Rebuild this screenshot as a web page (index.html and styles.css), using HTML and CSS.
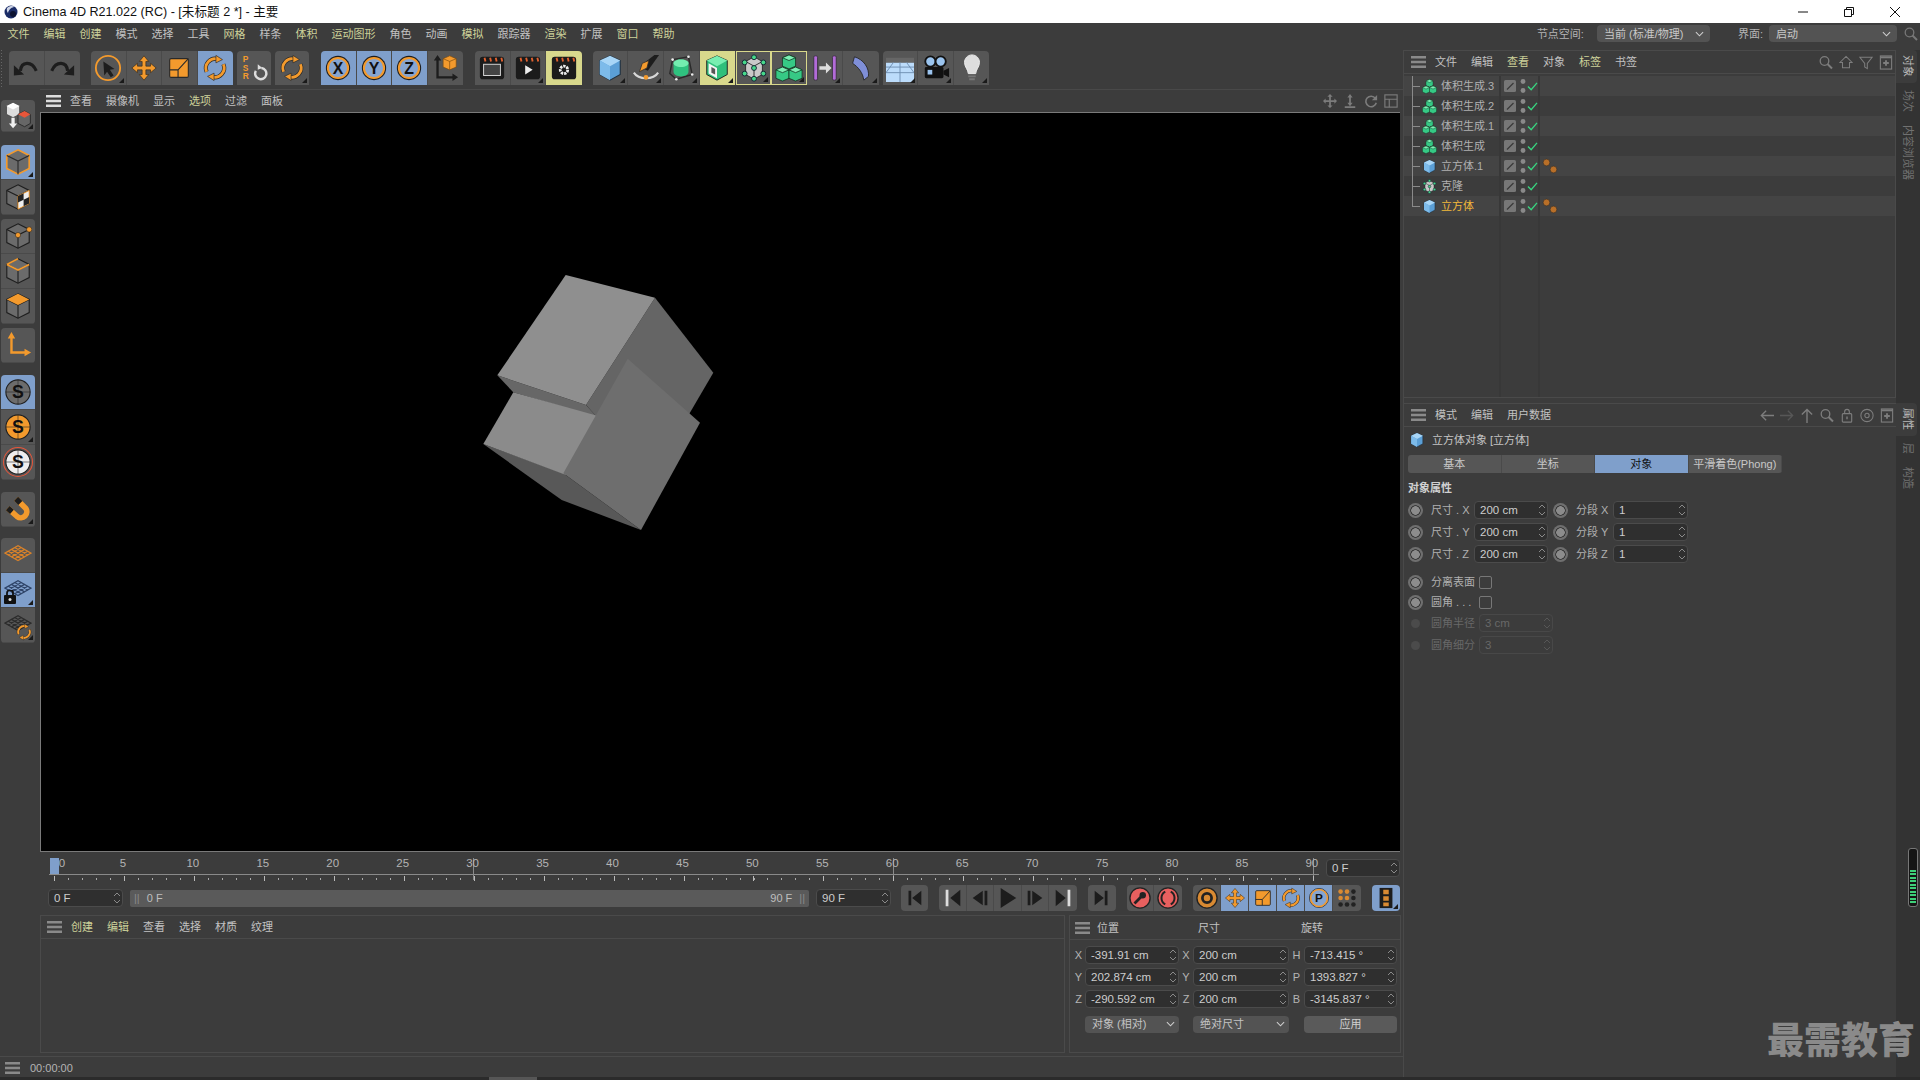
FILE: index.html
```html
<!DOCTYPE html>
<html lang="zh">
<head>
    <meta charset="UTF-8">
    <title>Cinema 4D R21.022 (RC) - [未标题 2 *] - 主要</title>
    <link rel="stylesheet" href="styles.css">
</head>
<body>
    <svg class="defs" aria-hidden="true">
        <symbol id="i-undo" viewBox="0 0 30 30"><path d="M9 18C10 8 21 7 26 18" fill="none" stroke="#1d1d1d" stroke-width="3.4"/><path d="M2 12l11 10-11 1z" fill="#1d1d1d"/></symbol>
        <symbol id="i-redo" viewBox="0 0 30 30"><path d="M21 18C20 8 9 7 4 18" fill="none" stroke="#1d1d1d" stroke-width="3.4"/><path d="M28 12L17 22l11 1z" fill="#1d1d1d"/></symbol>
        <symbol id="i-cursor" viewBox="0 0 30 30"><circle cx="15" cy="15" r="13" fill="none" stroke="#f39a2d" stroke-width="2"/><path d="M10 8l12 8-5 1 4 6-3 2-4-6-3 4z" fill="#1d1d1d"/></symbol>
        <symbol id="i-move" viewBox="0 0 30 30"><path d="M15 2l5 6h-3v5h5v-3l6 5-6 5v-3h-5v5h3l-5 6-5-6h3v-5H8v3l-6-5 6-5v3h5V8h-3z" fill="#f39a2d" stroke="#33281a" stroke-width=".7"/></symbol>
        <symbol id="i-scale" viewBox="0 0 30 30"><rect x="5" y="5" width="20" height="20" rx="1.5" fill="#f39a2d" stroke="#2a2a2a" stroke-width="1.2"/><path d="M5 17h9v8M14 17L25 5" fill="none" stroke="#2a2a2a" stroke-width="1.2"/></symbol>
        <symbol id="i-rotate" viewBox="0 0 30 30"><g fill="none" stroke="#2a2a2a" stroke-width="4.4"><path d="M6 19A10 10 0 0 1 18 5.500"/><path d="M24 11A10 10 0 0 1 12 24.500"/></g><g fill="none" stroke="#f39a2d" stroke-width="3"><path d="M6 19A10 10 0 0 1 18 5.500"/><path d="M24 11A10 10 0 0 1 12 24.500"/></g><path d="M16 1.500l7 4.500-7 3.500zM14 28.500L7 24l7-3.500z" fill="#f39a2d" stroke="#2a2a2a" stroke-width=".7"/></symbol>
        <symbol id="i-psr" viewBox="0 0 30 30"><path d="M23 15a6 6 0 1 1-6 3" fill="none" stroke="#ddd" stroke-width="2.600"/><path d="M19 11l5 4-5 2z" fill="#ddd"/></symbol>
        <symbol id="i-ring" viewBox="0 0 30 30"><circle cx="15" cy="15" r="13" fill="#1d1d1d"/><circle cx="15" cy="15" r="10.800" fill="#86a5d1" stroke="#f39a2d" stroke-width="2.200"/></symbol>
        <symbol id="i-coord" viewBox="0 0 30 30"><path d="M7 4v21h19" fill="none" stroke="#1d1d1d" stroke-width="2.500"/><path d="M7 1l4 6H3zM29 25l-6 4v-8z" fill="#1d1d1d"/><path d="M20 2l7 3v9l-7 3-7-3V5z" fill="#f39a2d" stroke="#7a4a10" stroke-width=".7"/><path d="M13 5l7 3 7-3M20 8v9" fill="none" stroke="#7a4a10" stroke-width=".7"/></symbol>
        <symbol id="i-clap" viewBox="0 0 30 30"><rect x="2" y="3" width="26" height="24" rx="3" fill="#1b1b1b"/><path d="M7 4l1 4M13 4l1 4M19 4l1 4M25 4l1 4" stroke="#e2612f" stroke-width="2"/></symbol>
        <symbol id="i-cube" viewBox="0 0 30 30"><path d="M15 2l11 5v15l-11 6-11-6V7z" fill="#5b9fd6" stroke="#22303c" stroke-width="1.200"/><path d="M15 2l11 5-11 6L4 7z" fill="#a8d6f7"/><path d="M15 13v15L4 22V7z" fill="#7dbbea"/></symbol>
        <symbol id="i-pen" viewBox="0 0 30 30"><path d="M13 16l2-8L24 1h5L17 18z" fill="#1d1d1d"/><path d="M8 19l3-9 7-3-2 8z" fill="#f39a2d" stroke="#2a2a2a" stroke-width=".8"/><path d="M2 20c5 8 21 8 26 0" fill="none" stroke="#d8d8d8" stroke-width="2.200"/><circle cx="15" cy="25" r="2.500" fill="#f39a2d"/></symbol>
        <symbol id="i-bool" viewBox="0 0 30 30"><path d="M6 6l17-3 4 19-17 5-7-6z" fill="none" stroke="#2a2a2a" stroke-width="1.500"/><path d="M15 6c5 0 8 2 8 4v9c0 3-4 5-8 5s-8-2-8-5v-9c0-2 3-4 8-4z" fill="#2fc27f"/><path d="M15 6c5 0 8 2 8 4s-3 4-8 4-8-2-8-4 3-4 8-4z" fill="#74eeb0"/><g fill="#eee"><circle cx="6" cy="6" r="1.400"/><circle cx="23" cy="3" r="1.400"/><circle cx="27" cy="22" r="1.400"/><circle cx="10" cy="27" r="1.400"/></g></symbol>
        <symbol id="i-shell" viewBox="0 0 30 30"><path d="M15 2l11 5v15l-11 6-11-6V7z" fill="#2fbf7b" stroke="#1d1d1d"/><path d="M15 2l11 5-11 6L4 7z" fill="#78eeb1"/><path d="M6 10l9 5v11l-9-5z" fill="#f4f4f4"/><path d="M9 14l4 2v6l-4-2z" fill="#555"/></symbol>
        <symbol id="i-cloner" viewBox="0 0 30 30"><path d="M15 3l9 5v14l-9 5-9-5V8z" fill="#c9c9c9" stroke="#2a2a2a"/><path d="M15 13v14M6 8l9 5 9-5" fill="none" stroke="#2a2a2a"/><g fill="#47d88a" stroke="#123"><circle cx="15" cy="3.500" r="2.600"/><circle cx="5" cy="9" r="2.600"/><circle cx="25" cy="9" r="2.600"/><circle cx="5" cy="21" r="2.600"/><circle cx="25" cy="21" r="2.600"/><circle cx="15" cy="26.500" r="2.600"/><circle cx="15" cy="15" r="2.600"/></g></symbol>
        <symbol id="i-boxes" viewBox="0 0 30 30"><g stroke="#12301f" stroke-width=".8"><path d="M15 1l7 3v9l-7 3-7-3V4z" fill="#36c985"/><path d="M15 1l7 3-7 3-7-3z" fill="#7cefb4"/><path d="M8 14l7 3v9l-7 3-7-3v-9z" fill="#36c985"/><path d="M8 14l7 3-7 3-7-3z" fill="#7cefb4"/><path d="M22 14l7 3v9l-7 3-7-3v-9z" fill="#36c985"/><path d="M22 14l7 3-7 3-7-3z" fill="#7cefb4"/></g></symbol>
        <symbol id="i-symmetry" viewBox="0 0 30 30"><rect x="3" y="2" width="4" height="26" rx="1.500" fill="#b26bd8" stroke="#222" stroke-width=".7"/><rect x="23" y="2" width="4" height="26" rx="1.500" fill="#b26bd8" stroke="#222" stroke-width=".7"/><path d="M9 13h7V9l6 6-6 6v-4H9z" fill="#ddd"/></symbol>
        <symbol id="i-bend" viewBox="0 0 30 30"><path d="M8 3c10 3 16 12 15 21l-5 4c-1-8-6-14-12-18z" fill="#7f8fd8" stroke="#2a2a2a"/></symbol>
        <symbol id="i-floor" viewBox="0 0 30 30"><path d="M0 9h30v21H0z" fill="#bcdcfb"/><path d="M0 4h30v5H0z" fill="#666"/><path d="M0 14h30M0 20h30M8 9L0 20M15 9v21M22 9l8 11" stroke="#6e8eb0"/></symbol>
        <symbol id="i-cam" viewBox="0 0 30 30"><circle cx="9" cy="8" r="5.500" fill="#9bc4ee" stroke="#111" stroke-width="2"/><circle cx="20" cy="8" r="5.500" fill="#9bc4ee" stroke="#111" stroke-width="2"/><rect x="3" y="14" width="20" height="12" rx="1.500" fill="#111"/><path d="M23 18l6-3v10l-6-3z" fill="#111"/><rect x="6" y="17" width="5" height="5" fill="#9bc4ee"/></symbol>
        <symbol id="i-bulb" viewBox="0 0 30 30"><path d="M15 1c5 0 8 4 8 8 0 5-4 8-4 12h-8c0-4-4-7-4-12 0-4 3-8 8-8z" fill="#ddd" stroke="#eee"/><path d="M11 23h8v2h-8zM12 26h6v2h-6z" fill="#777"/></symbol>
        <symbol id="i-model" viewBox="0 0 34 34"><path d="M11 1l8 4v10l-8 4-8-4V5z" fill="#ddd" stroke="#444"/><path d="M11 1l8 4-8 4-8-4z" fill="#fff"/><path d="M9 19v7H6l5 6 5-6h-3v-7z" fill="#eee"/><path d="M25 11l7 4v11l-7 4-8-4V15z" fill="#666" stroke="#222"/><path d="M25 11l7 4-7 4-8-4z" fill="#e8563a"/></symbol>
        <symbol id="i-gcube" viewBox="0 0 30 30"><path d="M15 2l12 6v14l-12 6-12-6V8z" fill="#6b6b6b" stroke="#1f1f1f" stroke-width="1.200"/><path d="M3 8l12 6 12-6M15 14v14" fill="none" stroke="#1f1f1f" stroke-width="1.200"/></symbol>
        <symbol id="i-ocube" viewBox="0 0 30 30"><path d="M15 2l12 6v14l-12 6-12-6V8z" fill="#6b6b6b" stroke="#f39a2d" stroke-width="1.800"/><path d="M3 8l12 6 12-6M15 14v14" fill="none" stroke="#2a2a2a" stroke-width="1.200"/></symbol>
        <symbol id="i-checker" viewBox="0 0 30 30"><use href="#i-gcube"/><path d="M15 14l12-6v14l-12 6z" fill="#eee" stroke="#f39a2d"/><path d="M15 14l6-3v7l-6 3zM21 18l6-3v7l-6 3z" fill="#222"/></symbol>
        <symbol id="i-points" viewBox="0 0 30 30"><use href="#i-gcube"/><circle cx="15" cy="14" r="2.800" fill="#f39a2d" stroke="#222" stroke-width=".6"/><circle cx="27" cy="8" r="2.800" fill="#f39a2d" stroke="#222" stroke-width=".6"/></symbol>
        <symbol id="i-edges" viewBox="0 0 30 30"><use href="#i-gcube"/><path d="M3 8l12 6 12-6M3 8l12-6" fill="none" stroke="#f39a2d" stroke-width="1.800"/></symbol>
        <symbol id="i-polys" viewBox="0 0 30 30"><use href="#i-gcube"/><path d="M15 2l12 6-12 6L3 8z" fill="#f39a2d"/></symbol>
        <symbol id="i-axis" viewBox="0 0 30 30"><path d="M8 6v17h17" fill="none" stroke="#f39a2d" stroke-width="2.600"/><path d="M8 1l4 7H4zM29 23l-7 4v-8z" fill="#f39a2d"/></symbol>
        <symbol id="i-snap" viewBox="0 0 30 30"><circle cx="15" cy="15" r="13" fill="currentColor" stroke="#222" stroke-width="1.200"/><path d="M2 15h26M15 2v26" stroke="#222" stroke-width=".6"/></symbol>
        <symbol id="i-magnet" viewBox="0 0 30 30"><path d="M4 14l10 9a6.400 6.400 0 0 0 9-9L13 4" fill="none" stroke="#f39a2d" stroke-width="6"/><path d="M4 14l4.500 4M13 4l4.500 4.500" fill="none" stroke="#1d1d1d" stroke-width="6"/></symbol>
        <symbol id="i-grid" viewBox="0 0 30 30"><path d="M1 13L15 5l14 8-14 8z" fill="none" stroke="currentColor" stroke-width="1.300"/><path d="M4.500 11l14 8M8 9l14 8M11.500 7l14 8M4.500 15l14-8M8 17l14-8M11.500 19l14-8" stroke="currentColor" stroke-width="1.300"/></symbol>
        <symbol id="i-lock" viewBox="0 0 14 14"><rect x="1" y="5" width="12" height="9" rx="1" fill="#111"/><path d="M4 5V3a3 3 0 0 1 6 0v2" fill="none" stroke="#111" stroke-width="1.800"/><circle cx="7" cy="9.500" r="1.500" fill="#ddd"/></symbol>
        <symbol id="i-first" viewBox="0 0 24 24"><path d="M6 4v16h3V4zM20 4v16l-10-8z" fill="#1c1c1c"/></symbol>
        <symbol id="i-prevkey" viewBox="0 0 24 24"><rect x="4" y="3" width="3" height="18" fill="#ddd"/><path d="M20 3v18L9 12z" fill="#1c1c1c"/></symbol>
        <symbol id="i-back" viewBox="0 0 24 24"><path d="M15 4v16L4 12zM17 4h3v16h-3z" fill="#1c1c1c"/></symbol>
        <symbol id="i-play" viewBox="0 0 24 24"><path d="M4 1v22l17-11z" fill="#1c1c1c"/></symbol>
        <symbol id="i-fwd" viewBox="0 0 24 24"><path d="M9 4v16l11-8zM4 4h3v16H4z" fill="#1c1c1c"/></symbol>
        <symbol id="i-nextkey" viewBox="0 0 24 24"><rect x="17" y="3" width="3" height="18" fill="#ddd"/><path d="M4 3v18l11-9z" fill="#1c1c1c"/></symbol>
        <symbol id="i-last" viewBox="0 0 24 24"><path d="M18 4v16h-3V4zM4 4v16l10-8z" fill="#1c1c1c"/></symbol>
        <symbol id="i-rec" viewBox="0 0 24 24"><circle cx="12" cy="12" r="11" fill="#e8605f" stroke="#222" stroke-width="1.500"/><path d="M6 18l7-7" stroke="#222" stroke-width="3"/><circle cx="15" cy="9" r="3.500" fill="#222"/></symbol>
        <symbol id="i-auto" viewBox="0 0 24 24"><circle cx="12" cy="12" r="11" fill="#e8605f" stroke="#222" stroke-width="1.500"/><path d="M9 5a8 8 0 0 0 0 14M15 5a8 8 0 0 1 0 14" fill="none" stroke="#222" stroke-width="2.200"/></symbol>
        <symbol id="i-key" viewBox="0 0 24 24"><circle cx="12" cy="12" r="11" fill="#d98a32" stroke="#222" stroke-width="1.500"/><circle cx="12" cy="12" r="5" fill="none" stroke="#222" stroke-width="3"/></symbol>
        <symbol id="i-pla" viewBox="0 0 30 30"><circle cx="15" cy="15" r="13" fill="none" stroke="#1d1d1d" stroke-width="1"/><circle cx="15" cy="15" r="11.500" fill="#86a5d1" stroke="#f39a2d" stroke-width="2.200"/></symbol>
        <symbol id="i-dots" viewBox="0 0 24 24"><g fill="#d98a32"><circle cx="5" cy="5" r="2.500"/><circle cx="12" cy="5" r="2.500"/><circle cx="5" cy="12" r="2.500"/><circle cx="12" cy="12" r="2.500"/></g><g fill="#222"><circle cx="19" cy="5" r="2.500"/><circle cx="19" cy="12" r="2.500"/><circle cx="5" cy="19" r="2.500"/><circle cx="12" cy="19" r="2.500"/><circle cx="19" cy="19" r="2.500"/></g></symbol>
        <symbol id="i-film" viewBox="0 0 24 24"><rect x="5" y="1" width="14" height="22" fill="#1d1d1d"/><path d="M9 3h6v5H9zM9 10h6v5H9zM9 17h6v4H9z" fill="#d98a32"/></symbol>
        <symbol id="i-burger" viewBox="0 0 15 12"><path d="M0 0h15v2.400H0zM0 4.800h15v2.400H0zM0 9.600h15V12H0z" fill="currentColor"/></symbol>
        <symbol id="i-search" viewBox="0 0 14 14"><circle cx="5.500" cy="5.500" r="4.300" fill="none" stroke="currentColor" stroke-width="1.300"/><path d="M8.500 8.500l4.500 4.500" stroke="currentColor" stroke-width="2"/></symbol>
        <symbol id="i-home" viewBox="0 0 16 16"><path d="M8 1l7 7h-3v6H4V8H1z" fill="none" stroke="currentColor" stroke-width="1.200"/></symbol>
        <symbol id="i-filter" viewBox="0 0 16 16"><path d="M1 2h14L9.500 9v6l-3-2V9z" fill="none" stroke="currentColor" stroke-width="1.200"/></symbol>
        <symbol id="i-plusbox" viewBox="0 0 14 16"><rect x="1" y="1" width="12" height="14" fill="none" stroke="currentColor" stroke-width="1.200"/><path d="M1 2.500h12" stroke="currentColor" stroke-width="2"/><path d="M7 5.500v6M4 8.500h6" stroke="currentColor" stroke-width="2"/></symbol>
        <symbol id="i-left" viewBox="0 0 16 14"><path d="M16 7H2M7 1.500L1.500 7 7 12.500" fill="none" stroke="currentColor" stroke-width="1.500"/></symbol>
        <symbol id="i-right" viewBox="0 0 16 14"><path d="M0 7h14M9 1.500L14.500 7 9 12.500" fill="none" stroke="currentColor" stroke-width="1.500"/></symbol>
        <symbol id="i-up" viewBox="0 0 14 16"><path d="M7 16V2M1.500 7L7 1.500 12.500 7" fill="none" stroke="currentColor" stroke-width="1.500"/></symbol>
        <symbol id="i-lockline" viewBox="0 0 14 16"><rect x="2" y="6" width="10" height="9" rx="1" fill="none" stroke="currentColor" stroke-width="1.200"/><path d="M4.500 6V4a2.500 2.500 0 0 1 5 0v2" fill="none" stroke="currentColor" stroke-width="1.200"/><path d="M7 9v3" stroke="currentColor" stroke-width="1.500"/></symbol>
        <symbol id="i-target" viewBox="0 0 16 16"><circle cx="8" cy="8" r="7" fill="none" stroke="currentColor" stroke-width="1.200"/><circle cx="8" cy="8" r="2.500" fill="none" stroke="currentColor" stroke-width="1.200"/></symbol>
        <symbol id="i-nav-move" viewBox="0 0 16 16"><path d="M8 0l3 3H9v4h4V5l3 3-3 3V9H9v4h2l-3 3-3-3h2V9H3v2L0 8l3-3v2h4V3H5z" fill="currentColor"/></symbol>
        <symbol id="i-nav-zoom" viewBox="0 0 16 16"><path d="M8 0l3 4H9v6h2L8 14l-3-4h2V4H5zM2 14h12v2H2z" fill="currentColor"/></symbol>
        <symbol id="i-nav-rot" viewBox="0 0 16 16"><path d="M13 5a6 6 0 1 0 1 5" fill="none" stroke="currentColor" stroke-width="1.800"/><path d="M15 1v6H9z" fill="currentColor"/></symbol>
        <symbol id="i-nav-pane" viewBox="0 0 16 16"><rect x="1" y="1" width="14" height="14" fill="none" stroke="currentColor" stroke-width="1.300"/><path d="M1 6h14M6 6v9" stroke="currentColor" stroke-width="1.300"/></symbol>
        <symbol id="i-spin" viewBox="0 0 8 14"><path d="M1 5l3-3 3 3M1 9l3 3 3-3" fill="none" stroke="currentColor"/></symbol>
        <symbol id="i-chev" viewBox="0 0 10 6"><path d="M1 1l4 4 4-4" fill="none" stroke="currentColor" stroke-width="1.200"/></symbol>
        <symbol id="i-check" viewBox="0 0 12 10"><path d="M1 5l3.500 3.500L11 1" fill="none" stroke="#38d47f" stroke-width="1.500"/></symbol>
        <symbol id="i-edit" viewBox="0 0 12 12"><rect width="12" height="12" rx="1.500" fill="#777"/><path d="M3 9.500L9.500 3" stroke="#3a3a3a" stroke-width="1.200"/></symbol>
        <symbol id="i-vis" viewBox="0 0 6 16"><circle cx="3" cy="3.500" r="2.400" fill="#8a8a8a"/><circle cx="3" cy="12.500" r="2.400" fill="#8a8a8a"/></symbol>
        <symbol id="i-tags" viewBox="0 0 16 16"><circle cx="4.500" cy="4.500" r="3.400" fill="#b86f28" stroke="#2a2a2a" stroke-width=".6"/><circle cx="11.500" cy="11.500" r="3.400" fill="#b86f28" stroke="#2a2a2a" stroke-width=".6"/></symbol>
        <symbol id="i-logo" viewBox="0 0 14 14"><circle cx="7" cy="7" r="6.500" fill="#1b2c66"/><path d="M3 3a6 6 0 0 1 8-1c-3 0-6 2-7 6-1-1-1.500-3-1-5z" fill="#cfd6e8"/><circle cx="9" cy="9" r="3" fill="#0b1230"/></symbol>
    </svg>

    <div class="titlebar">
        <svg class="title-logo"><use href="#i-logo"/></svg>
        <span class="title-text">Cinema 4D R21.022 (RC) - [未标题 2 *] - 主要</span>
        <div class="win-controls">
            <svg viewBox="0 0 12 12"><path d="M1 6h10" stroke="#111"/></svg>
            <svg viewBox="0 0 12 12"><path d="M1.500 3.500h7v7h-7zM3.500 3.500v-2h7v7h-2" fill="none" stroke="#111"/></svg>
            <svg viewBox="0 0 12 12"><path d="M1 1l10 10M11 1L1 11" stroke="#111"/></svg>
        </div>
    </div>

    <div class="menubar">
        <span class="hl">文件</span><span class="hl">编辑</span><span class="hl">创建</span><span>模式</span><span>选择</span><span>工具</span><span class="hl">网格</span><span>样条</span><span class="hl">体积</span><span class="hl">运动图形</span><span>角色</span><span>动画</span><span class="hl">模拟</span><span>跟踪器</span><span class="hl">渲染</span><span>扩展</span><span class="hl">窗口</span><span class="hl">帮助</span>
        <div class="node-space">
            <label>节点空间:</label>
            <div class="select select-node">当前 (标准/物理)<svg class="chev"><use href="#i-chev"/></svg></div>
            <label class="layout-label">界面:</label>
            <div class="select select-layout">启动<svg class="chev"><use href="#i-chev"/></svg></div>
            <svg class="menu-search"><use href="#i-search"/></svg>
        </div>
    </div>

    <div class="main">
        <div class="left-col">
            <div class="toolbar">
                <div class="tool-group first">
                    <div class="tb"><svg><use href="#i-undo"/></svg></div>
                    <div class="tb"><svg><use href="#i-redo"/></svg></div>
                </div>
                <div class="tool-group sep-first">
                    <div class="tb more"><svg><use href="#i-cursor"/></svg></div>
                    <div class="tb"><svg><use href="#i-move"/></svg></div>
                    <div class="tb"><svg><use href="#i-scale"/></svg></div>
                    <div class="tb on"><svg><use href="#i-rotate"/></svg></div>
                </div>
                <div class="tool-group">
                    <div class="tb single"><svg viewBox="0 0 30 30"><use href="#i-psr"/><text class="psr" x="3" y="9">P</text><text class="psr" x="3" y="18">S</text><text class="psr" x="3" y="27">R</text></svg></div>
                </div>
                <div class="tool-group"><div class="tb single more"><svg><use href="#i-rotate"/></svg></div></div>
                <div class="tool-group sep">
                    <div class="tb on"><svg viewBox="0 0 30 30"><use href="#i-ring"/><text class="glyph" x="15" y="21">X</text></svg></div>
                    <div class="tb on"><svg viewBox="0 0 30 30"><use href="#i-ring"/><text class="glyph" x="15" y="21">Y</text></svg></div>
                    <div class="tb on"><svg viewBox="0 0 30 30"><use href="#i-ring"/><text class="glyph" x="15" y="21">Z</text></svg></div>
                    <div class="tb"><svg><use href="#i-coord"/></svg></div>
                </div>
                <div class="tool-group sep">
                    <div class="tb"><svg viewBox="0 0 30 30"><use href="#i-clap"/><rect x="6" y="11" width="18" height="12" fill="#444" stroke="#ddd"/></svg></div>
                    <div class="tb more"><svg viewBox="0 0 30 30"><use href="#i-clap"/><path d="M12 12l8 5-8 5z" fill="#eee"/></svg></div>
                    <div class="tb lit"><svg viewBox="0 0 30 30"><use href="#i-clap"/><circle cx="15" cy="17" r="4" fill="none" stroke="#eee" stroke-width="3" stroke-dasharray="2.500 1"/></svg></div>
                </div>
                <div class="tool-group sep wide">
                    <div class="tb more"><svg><use href="#i-cube"/></svg></div>
                    <div class="tb more"><svg><use href="#i-pen"/></svg></div>
                    <div class="tb more"><svg><use href="#i-bool"/></svg></div>
                    <div class="tb lit more"><svg><use href="#i-shell"/></svg></div>
                    <div class="tb lit-line more"><svg><use href="#i-cloner"/></svg></div>
                    <div class="tb lit-line more"><svg><use href="#i-boxes"/></svg></div>
                    <div class="tb more"><svg><use href="#i-symmetry"/></svg></div>
                    <div class="tb more"><svg><use href="#i-bend"/></svg></div>
                </div>
                <div class="tool-group">
                    <div class="tb more"><svg><use href="#i-floor"/></svg></div>
                    <div class="tb more"><svg><use href="#i-cam"/></svg></div>
                    <div class="tb more"><svg><use href="#i-bulb"/></svg></div>
                </div>
            </div>

            <div class="work">
                <div class="tool-strip">
                    <div class="strip-group strip-model"><div class="sb more"><svg viewBox="0 0 34 34"><use href="#i-model"/></svg></div></div>
                    <div class="strip-group gap-13">
                        <div class="sb on more"><svg><use href="#i-ocube"/></svg></div>
                        <div class="sb"><svg><use href="#i-checker"/></svg></div>
                    </div>
                    <div class="strip-group">
                        <div class="sb"><svg><use href="#i-points"/></svg></div>
                        <div class="sb"><svg><use href="#i-edges"/></svg></div>
                        <div class="sb"><svg><use href="#i-polys"/></svg></div>
                    </div>
                    <div class="strip-group"><div class="sb"><svg><use href="#i-axis"/></svg></div></div>
                    <div class="strip-group gap-12">
                        <div class="sb on"><svg class="snap-gray" viewBox="0 0 30 30"><use href="#i-snap"/><text class="glyph-s" x="15" y="21.500">S</text></svg></div>
                        <div class="sb more"><svg class="snap-orange" viewBox="0 0 30 30"><use href="#i-snap"/><text class="glyph-s" x="15" y="21.500">S</text></svg></div>
                        <div class="sb"><svg class="snap-white" viewBox="0 0 30 30"><use href="#i-snap"/><text class="glyph-s" x="15" y="21.500">S</text></svg></div>
                    </div>
                    <div class="strip-group gap-12"><div class="sb more"><svg><use href="#i-magnet"/></svg></div></div>
                    <div class="strip-group gap-11">
                        <div class="sb"><svg class="grid-orange"><use href="#i-grid"/></svg></div>
                        <div class="sb on more"><svg class="grid-blue"><use href="#i-grid"/></svg><svg class="badge-lock"><use href="#i-lock"/></svg></div>
                        <div class="sb more"><svg class="grid-dark"><use href="#i-grid"/></svg><svg class="badge-rot"><use href="#i-rotate"/></svg></div>
                    </div>
                </div>

                <div class="center">
                    <div class="panel-menu vp-menu">
                        <svg class="burger"><use href="#i-burger"/></svg>
                        <span>查看</span><span>摄像机</span><span>显示</span><span class="hl">选项</span><span>过滤</span><span>面板</span>
                        <div class="vp-nav">
                            <svg><use href="#i-nav-move"/></svg>
                            <svg><use href="#i-nav-zoom"/></svg>
                            <svg><use href="#i-nav-rot"/></svg>
                            <svg><use href="#i-nav-pane"/></svg>
                        </div>
                    </div>

                    <div class="viewport">
                        <svg viewBox="41 113 1359 738">
                            <polygon points="655,297.700 713.300,372.700 688,416 620,420 595,415 586,405" fill="#656565"/>
                            <polygon points="497.300,375.300 586,405 597,417 513.300,392.300" fill="#676767"/>
                            <polygon points="565.700,275 655,297.700 586,405 497.300,375.300" fill="#8f8f8f"/>
                            <polygon points="483.300,444 563.300,473.300 641,530 561.700,500" fill="#585858"/>
                            <polygon points="513.300,392.300 598,416 566,475 483.300,444" fill="#8b8b8b"/>
                            <polygon points="627.700,358.700 700,422.700 641,530 563.300,473.300" fill="#6e6e6e"/>
                        </svg>
                    </div>

                    <div class="timeline">
                        <div class="ruler">
                            <div class="ruler-labels">
                                <span class="zero">0</span><span>5</span><span>10</span><span>15</span><span>20</span><span>25</span><span>30</span><span>35</span><span>40</span><span>45</span><span>50</span><span>55</span><span>60</span><span>65</span><span>70</span><span>75</span><span>80</span><span>85</span><span>90</span>
                            </div>
                            <div class="ruler-line"></div>
                            <div class="ruler-ticks"></div>
                            <div class="ruler-head"></div>
                        </div>
                        <div class="field frame-now">0 F<svg class="spin"><use href="#i-spin"/></svg></div>
                    </div>

                    <div class="transport">
                        <div class="field frame-start">0 F<svg class="spin"><use href="#i-spin"/></svg></div>
                        <div class="range">
                            <span class="range-side"><i>||</i>0 F</span>
                            <span class="range-side">90 F<i>||</i></span>
                        </div>
                        <div class="field frame-end">90 F<svg class="spin"><use href="#i-spin"/></svg></div>
                        <div class="tool-group trans-first"><div class="pb"><svg><use href="#i-first"/></svg></div></div>
                        <div class="tool-group trans-sep">
                            <div class="pb"><svg><use href="#i-prevkey"/></svg></div>
                            <div class="pb"><svg><use href="#i-back"/></svg></div>
                            <div class="pb"><svg><use href="#i-play"/></svg></div>
                            <div class="pb"><svg><use href="#i-fwd"/></svg></div>
                            <div class="pb"><svg><use href="#i-nextkey"/></svg></div>
                        </div>
                        <div class="tool-group trans-sep"><div class="pb"><svg><use href="#i-last"/></svg></div></div>
                        <div class="tool-group trans-sep">
                            <div class="pb"><svg><use href="#i-rec"/></svg></div>
                            <div class="pb"><svg><use href="#i-auto"/></svg></div>
                        </div>
                        <div class="tool-group trans-sep keys">
                            <div class="pb"><svg><use href="#i-key"/></svg></div>
                            <div class="pb on"><svg><use href="#i-move"/></svg></div>
                            <div class="pb on"><svg><use href="#i-scale"/></svg></div>
                            <div class="pb on"><svg><use href="#i-rotate"/></svg></div>
                            <div class="pb on"><svg viewBox="0 0 30 30"><use href="#i-pla"/><text class="glyph-p" x="15" y="21">P</text></svg></div>
                            <div class="pb"><svg><use href="#i-dots"/></svg></div>
                        </div>
                        <div class="tool-group trans-sep"><div class="pb on more"><svg><use href="#i-film"/></svg></div></div>
                    </div>

                    <div class="bottom">
                        <div class="materials">
                            <div class="panel-menu mat-menu">
                                <svg class="burger"><use href="#i-burger"/></svg>
                                <span class="hl">创建</span><span class="hl">编辑</span><span>查看</span><span>选择</span><span>材质</span><span>纹理</span>
                            </div>
                        </div>
                        <div class="coords">
                            <div class="coords-head">
                                <svg class="burger"><use href="#i-burger"/></svg>
                                <span class="c-pos">位置</span><span class="c-size">尺寸</span><span>旋转</span>
                            </div>
                            <div class="coords-grid">
                                <span>X</span><div class="field">-391.91 cm<svg class="spin"><use href="#i-spin"/></svg></div>
                                <span>X</span><div class="field">200 cm<svg class="spin"><use href="#i-spin"/></svg></div>
                                <span>H</span><div class="field">-713.415 °<svg class="spin"><use href="#i-spin"/></svg></div>
                                <span>Y</span><div class="field">202.874 cm<svg class="spin"><use href="#i-spin"/></svg></div>
                                <span>Y</span><div class="field">200 cm<svg class="spin"><use href="#i-spin"/></svg></div>
                                <span>P</span><div class="field">1393.827 °<svg class="spin"><use href="#i-spin"/></svg></div>
                                <span>Z</span><div class="field">-290.592 cm<svg class="spin"><use href="#i-spin"/></svg></div>
                                <span>Z</span><div class="field">200 cm<svg class="spin"><use href="#i-spin"/></svg></div>
                                <span>B</span><div class="field">-3145.837 °<svg class="spin"><use href="#i-spin"/></svg></div>
                                <div class="select coord-select col-2">对象 (相对)<svg class="chev"><use href="#i-chev"/></svg></div>
                                <div class="select coord-select col-4">绝对尺寸<svg class="chev"><use href="#i-chev"/></svg></div>
                                <div class="apply col-6">应用</div>
                            </div>
                        </div>
                    </div>
                </div>
            </div>

            <div class="statusbar">
                <svg class="burger"><use href="#i-burger"/></svg>
                <span>00:00:00</span>
            </div>
        </div>

        <div class="right-col">
            <div class="panels">
                <div class="objects">
                    <div class="panel-menu obj-menu">
                        <svg class="burger"><use href="#i-burger"/></svg>
                        <span>文件</span><span>编辑</span><span class="hl">查看</span><span>对象</span><span class="hl">标签</span><span>书签</span>
                        <div class="head-icons">
                            <svg><use href="#i-search"/></svg>
                            <svg><use href="#i-home"/></svg>
                            <svg><use href="#i-filter"/></svg>
                            <svg><use href="#i-plusbox"/></svg>
                        </div>
                    </div>
                    <div class="tree">
                        <div class="row"><div class="name"><svg><use href="#i-boxes"/></svg>体积生成.3</div><div class="flags"><svg class="edit"><use href="#i-edit"/></svg><svg class="vis"><use href="#i-vis"/></svg><svg class="check"><use href="#i-check"/></svg></div><div class="tags"></div></div>
                        <div class="row"><div class="name"><svg><use href="#i-boxes"/></svg>体积生成.2</div><div class="flags"><svg class="edit"><use href="#i-edit"/></svg><svg class="vis"><use href="#i-vis"/></svg><svg class="check"><use href="#i-check"/></svg></div><div class="tags"></div></div>
                        <div class="row"><div class="name"><svg><use href="#i-boxes"/></svg>体积生成.1</div><div class="flags"><svg class="edit"><use href="#i-edit"/></svg><svg class="vis"><use href="#i-vis"/></svg><svg class="check"><use href="#i-check"/></svg></div><div class="tags"></div></div>
                        <div class="row"><div class="name"><svg><use href="#i-boxes"/></svg>体积生成</div><div class="flags"><svg class="edit"><use href="#i-edit"/></svg><svg class="vis"><use href="#i-vis"/></svg><svg class="check"><use href="#i-check"/></svg></div><div class="tags"></div></div>
                        <div class="row"><div class="name"><svg><use href="#i-cube"/></svg>立方体.1</div><div class="flags"><svg class="edit"><use href="#i-edit"/></svg><svg class="vis"><use href="#i-vis"/></svg><svg class="check"><use href="#i-check"/></svg></div><div class="tags"><svg><use href="#i-tags"/></svg></div></div>
                        <div class="row"><div class="name"><svg><use href="#i-cloner"/></svg>克隆</div><div class="flags"><svg class="edit"><use href="#i-edit"/></svg><svg class="vis"><use href="#i-vis"/></svg><svg class="check"><use href="#i-check"/></svg></div><div class="tags"></div></div>
                        <div class="row last selected"><div class="name"><svg><use href="#i-cube"/></svg>立方体</div><div class="flags"><svg class="edit"><use href="#i-edit"/></svg><svg class="vis"><use href="#i-vis"/></svg><svg class="check"><use href="#i-check"/></svg></div><div class="tags"><svg><use href="#i-tags"/></svg></div></div>
                        <div class="row filler"><div class="name"></div><div class="flags"></div><div class="tags"></div></div>
                    </div>
                </div>

                <div class="attrs">
                    <div class="panel-menu obj-menu">
                        <svg class="burger"><use href="#i-burger"/></svg>
                        <span>模式</span><span>编辑</span><span>用户数据</span>
                        <div class="head-icons attr-icons">
                            <svg><use href="#i-left"/></svg>
                            <svg class="dim"><use href="#i-right"/></svg>
                            <svg><use href="#i-up"/></svg>
                            <svg><use href="#i-search"/></svg>
                            <svg><use href="#i-lockline"/></svg>
                            <svg><use href="#i-target"/></svg>
                            <svg><use href="#i-plusbox"/></svg>
                        </div>
                    </div>
                    <div class="attr-title"><svg><use href="#i-cube"/></svg>立方体对象 [立方体]</div>
                    <div class="tabs">
                        <div>基本</div><div>坐标</div><div class="active">对象</div><div>平滑着色(Phong)</div>
                    </div>
                    <div class="attr-heading">对象属性</div>
                    <div class="prop-rows">
                        <div class="prop">
                            <i class="radio"></i><label class="prop-label">尺寸 . X</label><div class="field size">200 cm<svg class="spin"><use href="#i-spin"/></svg></div>
                            <i class="radio second"></i><label class="prop-label seg">分段 X</label><div class="field segs">1<svg class="spin"><use href="#i-spin"/></svg></div>
                        </div>
                        <div class="prop">
                            <i class="radio"></i><label class="prop-label">尺寸 . Y</label><div class="field size">200 cm<svg class="spin"><use href="#i-spin"/></svg></div>
                            <i class="radio second"></i><label class="prop-label seg">分段 Y</label><div class="field segs">1<svg class="spin"><use href="#i-spin"/></svg></div>
                        </div>
                        <div class="prop">
                            <i class="radio"></i><label class="prop-label">尺寸 . Z</label><div class="field size">200 cm<svg class="spin"><use href="#i-spin"/></svg></div>
                            <i class="radio second"></i><label class="prop-label seg">分段 Z</label><div class="field segs">1<svg class="spin"><use href="#i-spin"/></svg></div>
                        </div>
                    </div>
                    <div class="check-rows">
                        <div class="prop"><i class="radio"></i><label class="prop-label wide">分离表面</label><i class="checkbox"></i></div>
                        <div class="prop"><i class="radio"></i><label class="prop-label wide">圆角 . . .</label><i class="checkbox"></i></div>
                    </div>
                    <div class="off-rows">
                        <div class="prop off"><i class="radio small"></i><label class="prop-label wide">圆角半径</label><div class="field size">3 cm<svg class="spin"><use href="#i-spin"/></svg></div></div>
                        <div class="prop off"><i class="radio small"></i><label class="prop-label wide">圆角细分</label><div class="field size">3<svg class="spin"><use href="#i-spin"/></svg></div></div>
                    </div>
                </div>
            </div>

            <div class="side">
                <div class="side-top">
                    <span class="side-tab active">对象</span>
                    <span class="side-tab">场次</span>
                    <span class="side-tab">内容浏览器</span>
                </div>
                <div class="side-bottom">
                    <span class="side-tab active">属性</span>
                    <span class="side-tab">层</span>
                    <span class="side-tab">构造</span>
                    <div class="meter"><div class="meter-fill"></div></div>
                </div>
            </div>
        </div>
    </div>

    <div class="footer"><div class="footer-thumb"></div></div>
    <div class="watermark">最需教育</div>
</body>
</html>
```

FILE: styles.css
```css
* {
    margin: 0;
    padding: 0;
    box-sizing: border-box;
}

body {
    width: 1920px;
    height: 1080px;
    overflow: hidden;
    position: relative;
    display: flex;
    flex-direction: column;
    background: #3c3c3c;
    color: #c2c2c2;
    font-family: "Liberation Sans", "Noto Sans CJK SC", sans-serif;
    font-size: 11px;
    line-height: 16px;
}

svg {
    display: block;
    flex: none;
}

.defs {
    width: 0;
    height: 0;
    position: absolute;
}

.hl {
    color: #cdd29a;
}

.glyph,
.glyph-s,
.glyph-p,
.psr {
    font-family: "Liberation Sans", sans-serif;
    font-weight: 700;
    text-anchor: middle;
    fill: #111;
}

.glyph {
    font-size: 17px;
}

.glyph-s {
    font-size: 19px;
}

.glyph-p {
    font-size: 16px;
}

.psr {
    font-size: 9px;
    text-anchor: start;
    fill: #f39a2d;
}

/* title + menu */
.titlebar {
    height: 23px;
    background: #ffffff;
    color: #111;
    display: flex;
    align-items: center;
    padding-left: 4px;
    font-size: 12.6px;
    flex: none;
}

.title-logo {
    width: 14px;
    height: 14px;
    margin-right: 5px;
}

.win-controls {
    margin-left: auto;
    display: flex;
    gap: 34px;
    padding-right: 19px;
}

.win-controls svg {
    width: 12px;
    height: 12px;
}

.menubar {
    height: 27px;
    display: flex;
    align-items: center;
    padding: 0 0 6px 7.5px;
    gap: 14px;
    flex: none;
}

.node-space {
    margin-left: auto;
    display: flex;
    align-items: center;
    color: #b4b4b4;
}

.select {
    height: 17px;
    background: #535353;
    border-radius: 4px;
    display: flex;
    align-items: center;
    justify-content: space-between;
    padding: 0 6px 0 7px;
    color: #c8c8c8;
}

.chev {
    width: 9px;
    height: 6px;
    color: #cfcfcf;
}

.select-node {
    width: 113px;
    margin-left: 13px;
}

.layout-label {
    margin-left: 28px;
}

.select-layout {
    width: 128px;
    margin-left: 6px;
}

.menu-search {
    width: 14px;
    height: 14px;
    color: #777;
    margin: 0 2px 0 7px;
}

.main {
    flex: 1;
    display: flex;
    min-height: 0;
}

.left-col {
    width: 1404px;
    display: flex;
    flex-direction: column;
    border-right: 1px solid #494949;
    flex: none;
}

/* main toolbar */
.toolbar {
    height: 39px;
    padding: 1px 0 0 9px;
    display: flex;
    gap: 4px;
    flex: none;
    background-image: radial-gradient(#666 0.6px, transparent 0.8px);
    background-size: 3px 3px;
    background-repeat: repeat-y;
    background-position: 0 2px;
}

.tool-group {
    display: flex;
    border-radius: 4px;
    overflow: hidden;
}

.sep-first {
    margin-left: 7px;
}

.sep {
    margin-left: 8px;
}

.sep.wide {
    margin-left: 7px;
}

.tb {
    position: relative;
    width: 35.5px;
    height: 34px;
    background: #565656;
    display: flex;
    align-items: center;
    justify-content: center;
    border-right: 1px solid #4a4a4a;
}

.wide .tb {
    width: 35.8px;
}

.tb:last-child {
    border-right: none;
}

.tb svg {
    width: 28px;
    height: 28px;
}

.tb.single {
    width: 34px;
}

.tb.on {
    background: #7f9fcb;
}

.tb.lit {
    background: #d8d88c;
}

.tb.lit-line {
    border: 1px solid #d8d88c;
}

.more::after {
    content: "";
    position: absolute;
    right: 2px;
    bottom: 2px;
    border-left: 5px solid transparent;
    border-bottom: 5px solid #1a1a1a;
}

/* left strip */
.work {
    flex: 1;
    display: flex;
    min-height: 0;
}

.tool-strip {
    width: 40px;
    flex: none;
    padding-left: 1px;
    display: flex;
    flex-direction: column;
    gap: 4px;
}

.strip-group {
    width: 34px;
    border-radius: 4px;
    overflow: hidden;
    flex: none;
}

.strip-model {
    margin-top: 11px;
}

.gap-13 {
    margin-top: 9px;
}

.gap-12 {
    margin-top: 8px;
}

.gap-11 {
    margin-top: 7px;
}

.sb {
    position: relative;
    height: 35px;
    background: #565656;
    display: flex;
    align-items: center;
    justify-content: center;
    border-bottom: 1px solid #4a4a4a;
}

.sb.on {
    background: #7f9fcb;
}

.strip-model .sb {
    height: 32px;
}

.sb svg {
    width: 28px;
    height: 28px;
}

.sb .badge-lock {
    position: absolute;
    left: 2px;
    bottom: 3px;
    width: 14px;
    height: 14px;
}

.sb .badge-rot {
    position: absolute;
    right: 2px;
    bottom: 1px;
    width: 18px;
    height: 18px;
}

.snap-gray {
    color: #6c6c6c;
}

.snap-orange {
    color: #f39a2d;
}

.snap-white {
    color: #eeeeee;
    border-radius: 50%;
    box-shadow: 0 0 0 1px #e8563a;
}

.grid-orange {
    color: #d9822a;
}

.grid-blue {
    color: #2f4468;
}

.grid-dark {
    color: #2c2c2c;
}

/* centre column */
.center {
    flex: 1;
    min-width: 0;
    display: flex;
    flex-direction: column;
}

.panel-menu {
    display: flex;
    align-items: center;
    gap: 14px;
    flex: none;
}

.burger {
    width: 15px;
    height: 12px;
    color: #8a8a8a;
    margin-right: -5px;
}

.vp-menu {
    height: 23px;
    padding-left: 6px;
    border-top: 1px solid #494949;
}

.vp-menu .burger {
    color: #dcdcdc;
}

.vp-nav {
    margin-left: auto;
    display: flex;
    gap: 6.4px;
    padding-right: 5px;
    color: #7c7c7c;
}

.vp-nav svg {
    width: 14px;
    height: 14px;
}

.viewport {
    height: 740px;
    width: 1360px;
    flex: none;
    background: #000;
    border: 1px solid #7a7a7a;
    border-right: none;
}

.viewport svg {
    width: 100%;
    height: 100%;
}

/* timeline */
.timeline {
    height: 30px;
    display: flex;
    flex: none;
}

.ruler {
    position: relative;
    width: 1286px;
    flex: none;
    background:
        linear-gradient(#8a8a8a, #8a8a8a) 433px 6px / 1px 22px no-repeat,
        linear-gradient(#8a8a8a, #8a8a8a) 853px 6px / 1px 22px no-repeat,
        linear-gradient(#8a8a8a, #8a8a8a) 1273px 6px / 1px 22px no-repeat;
}

.ruler-labels {
    display: flex;
    height: 22px;
    padding-top: 5px;
    margin-left: -22px;
    line-height: 13px;
    font-size: 11.5px;
    color: #b4b4b4;
}

.ruler-labels span {
    width: 69.95px;
    flex: none;
    text-align: center;
}

.ruler-labels .zero {
    padding-left: 18px;
}

.ruler-line {
    margin-left: 9px;
    width: 1270px;
    border-top: 1px solid #8a8a8a;
}

.ruler-ticks {
    margin: 0 0 0 14px;
    width: 1260px;
    height: 6px;
    background:
        repeating-linear-gradient(90deg, #bbb 0 1px, transparent 1px 69.95px) 0 1px / 100% 5px no-repeat,
        repeating-linear-gradient(90deg, #aaa 0 1px, transparent 1px 13.99px) 0 3px / 100% 2px no-repeat;
}

.ruler-head {
    position: absolute;
    left: 10px;
    top: 6px;
    width: 9px;
    height: 16px;
    background: #7f9fcb;
}

.field {
    height: 18px;
    background: #2f2f2f;
    border: 1px solid #4b4b4b;
    border-radius: 4px;
    display: flex;
    align-items: center;
    justify-content: space-between;
    padding: 0 1px 0 5px;
    color: #cdcdcd;
    font-size: 11.5px;
    white-space: nowrap;
    overflow: hidden;
}

.spin {
    width: 8px;
    height: 14px;
    color: #8a8a8a;
}

.frame-now {
    width: 74px;
    margin-top: 7px;
}

.transport {
    height: 32px;
    padding-left: 8px;
    display: flex;
    align-items: center;
    flex: none;
}

.frame-start {
    width: 75px;
}

.range {
    width: 679px;
    height: 17px;
    margin-left: 7px;
    background: #5a5a5a;
    border-radius: 2px;
    display: flex;
    justify-content: space-between;
    align-items: center;
    padding: 0 4px;
    color: #bfbfbf;
}

.range-side {
    display: flex;
    gap: 7px;
}

.range-side i {
    font-style: normal;
    color: #8a8a8a;
}

.frame-end {
    width: 75px;
    margin-left: 7px;
}

.trans-first {
    margin-left: 9.5px;
}

.trans-sep {
    margin-left: 11.3px;
}

.pb {
    position: relative;
    width: 27.5px;
    height: 26px;
    background: #565656;
    display: flex;
    align-items: center;
    justify-content: center;
    border-right: 1px solid #4a4a4a;
}

.keys .pb {
    width: 28px;
}

.pb.on {
    background: #7f9fcb;
}

.pb:last-child {
    border-right: none;
}

.pb svg {
    width: 22px;
    height: 22px;
}

/* bottom panels */
.bottom {
    display: flex;
    height: 138px;
    margin-top: 1px;
    flex: none;
    gap: 4px;
    padding-right: 2px;
}

.materials {
    width: 1025px;
    flex: none;
    border: 1px solid #4a4a4a;
}

.mat-menu {
    height: 23px;
    padding-left: 6px;
    border-bottom: 1px solid #4a4a4a;
}

.coords {
    flex: 1;
    border: 1px solid #4a4a4a;
}

.coords-head {
    height: 24px;
    display: flex;
    align-items: center;
    padding-left: 5px;
    border-bottom: 1px solid #4a4a4a;
}

.c-pos {
    margin-left: 12px;
    width: 101px;
}

.c-size {
    width: 103px;
}

.coords-grid {
    display: grid;
    grid-template-columns: 13px 94px 14px 96px 15px 93px;
    grid-auto-rows: 18px;
    row-gap: 4px;
    padding: 6px 0 0 2px;
    align-items: center;
}

.coords-grid > span {
    text-align: center;
    color: #b4b4b4;
}

.coord-select {
    margin: 3px 0 -3px;
    color: #c4c4c4;
    padding: 0 4px 0 7px;
}

.col-2 {
    grid-column: 2;
}

.col-4 {
    grid-column: 4;
}

.col-6 {
    grid-column: 6;
}

.apply {
    height: 17px;
    margin: 3px 0 -3px;
    background: #5a5a5a;
    border-radius: 4px;
    text-align: center;
    line-height: 17px;
    color: #d0d0d0;
}

.statusbar {
    margin-top: 3px;
    height: 21px;
    flex: none;
    display: flex;
    align-items: center;
    gap: 15px;
    padding: 1px 0 0 5px;
    border-top: 1px solid #4a4a4a;
    color: #b4b4b4;
}

/* right column */
.right-col {
    flex: 1;
    display: flex;
    min-width: 0;
}

.panels {
    width: 492px;
    flex: none;
    display: flex;
    flex-direction: column;
}

.objects {
    height: 348px;
    flex: none;
    display: flex;
    flex-direction: column;
    border: 1px solid #4a4a4a;
    border-left: none;
}

.obj-menu {
    height: 23px;
    padding-left: 7px;
    border-bottom: 1px solid #4a4a4a;
}

.head-icons {
    margin-left: auto;
    display: flex;
    align-items: center;
    gap: 6px;
    padding-right: 2px;
    color: #7d7d7d;
}

.head-icons svg {
    width: 14px;
    height: 15px;
}

.attr-icons .dim {
    color: #575757;
}

.tree {
    flex: 1;
    margin-top: 2px;
    display: flex;
    flex-direction: column;
}

.row {
    height: 20px;
    flex: none;
    display: grid;
    grid-template-columns: 97px 39px 1fr;
    background: linear-gradient(#8a8a8a, #8a8a8a) 8px 0 / 1px 100% no-repeat;
}

.row:nth-child(odd) {
    background-color: #444444;
}

.row.last {
    background-size: 1px 50%;
}

.row > div {
    display: flex;
    align-items: center;
}

.row .name {
    padding-left: 19px;
    gap: 4px;
    color: #b0b0b0;
    border-right: 2px solid #383838;
    white-space: nowrap;
}

.row .name svg {
    width: 15px;
    height: 15px;
}

.row .name::before {
    content: "";
    width: 8px;
    margin-left: -11px;
    margin-right: -2px;
    border-top: 1px solid #8a8a8a;
}

.row.selected .name {
    color: #f2b93a;
}

.row .flags {
    padding-left: 3px;
    gap: 4px;
    border-right: 2px solid #383838;
}

.edit {
    width: 12px;
    height: 12px;
}

.vis {
    width: 6px;
    height: 16px;
}

.check {
    width: 11px;
    height: 9px;
    margin-left: -3px;
}

.row .tags {
    padding-left: 2px;
}

.row .tags svg {
    width: 16px;
    height: 16px;
}

.row.filler {
    flex: 1;
    background: none;
}

.filler .name::before {
    display: none;
}

.attrs {
    flex: 1;
    margin-top: 5px;
    border-top: 1px solid #4a4a4a;
}

.attr-title {
    height: 26px;
    display: flex;
    align-items: center;
    gap: 7px;
    padding-left: 5px;
    color: #c4c4c4;
}

.attr-title svg {
    width: 16px;
    height: 16px;
}

.tabs {
    width: 374px;
    height: 18px;
    margin: 2px 0 0 4px;
    display: grid;
    grid-template-columns: repeat(4, 1fr);
    border-radius: 3px;
    overflow: hidden;
    background: #565656;
}

.tabs div {
    text-align: center;
    line-height: 18px;
    color: #c8c8c8;
    border-right: 1px solid #4a4a4a;
    white-space: nowrap;
}

.tabs .active {
    background: #7f9fcb;
    color: #111;
}

.attr-heading {
    height: 16px;
    margin: 7px 0 5px 4px;
    font-weight: 700;
    color: #d0d0d0;
}

.prop-rows {
    display: flex;
    flex-direction: column;
    gap: 4px;
}

.prop {
    height: 18px;
    display: flex;
    align-items: center;
    padding-left: 4px;
    color: #b0b0b0;
}

.radio {
    width: 15px;
    height: 15px;
    flex: none;
    border-radius: 50%;
    margin-right: 8px;
    background: radial-gradient(circle, #8c8c8c 0 4px, #3c3c3c 4.5px 5px, #6f6f6f 5.5px);
}

.radio.second {
    margin-left: 5px;
}

.radio.small {
    width: 9px;
    height: 9px;
    margin: 0 11px 0 3px;
    background: #4b4b4b;
}

.prop-label {
    width: 43px;
    flex: none;
    white-space: nowrap;
}

.prop-label.seg {
    width: 37px;
}

.prop-label.wide {
    width: 48px;
}

.field.size {
    width: 74px;
}

.field.segs {
    width: 75px;
}

.check-rows {
    margin-top: 10px;
    display: flex;
    flex-direction: column;
    gap: 2px;
}

.checkbox {
    width: 13px;
    height: 13px;
    border: 1px solid #777;
    border-radius: 2px;
}

.off-rows {
    margin-top: 3px;
    display: flex;
    flex-direction: column;
    gap: 4px;
}

.prop.off {
    color: #686868;
}

.off .field {
    background: #3c3c3c;
    border-color: #484848;
    color: #686868;
}

.off .spin {
    color: #575757;
}

/* side tabs */
.side {
    flex: 1;
    background: #333333;
    display: flex;
    flex-direction: column;
}

.side-top {
    height: 353px;
    flex: none;
}

.side-top,
.side-bottom {
    display: flex;
    flex-direction: column;
}

.side-bottom {
    flex: 1;
}

.side-tab {
    writing-mode: vertical-rl;
    text-orientation: sideways;
    width: 21px;
    padding: 7px 1px 6px 0;
    color: #717171;
    line-height: 16px;
}

.side-tab.active {
    background: #3c3c3c;
    color: #b8b8b8;
    border-radius: 0 4px 4px 0;
    padding: 5px 1px 6px 0;
}

.meter {
    width: 10px;
    height: 59px;
    margin: 353px 0 0 12px;
    border: 1.5px solid #777;
    border-radius: 3px;
    background: #151515;
    display: flex;
    flex-direction: column;
    justify-content: flex-end;
    padding: 0 1px 2px;
}

.meter-fill {
    height: 34px;
    background: repeating-linear-gradient(#3ecf78 0 2px, transparent 2px 3.500px);
}

/* bottom edge */
.footer {
    height: 3px;
    flex: none;
    background: #2b2b2b;
}

.footer-thumb {
    width: 48px;
    height: 3px;
    margin-left: 489px;
    background: #565656;
}

.watermark {
    position: absolute;
    right: 5px;
    bottom: 20px;
    font-family: "Noto Sans CJK SC", sans-serif;
    font-weight: 900;
    font-size: 37px;
    line-height: 44px;
    color: #8a8a8a;
}
```
